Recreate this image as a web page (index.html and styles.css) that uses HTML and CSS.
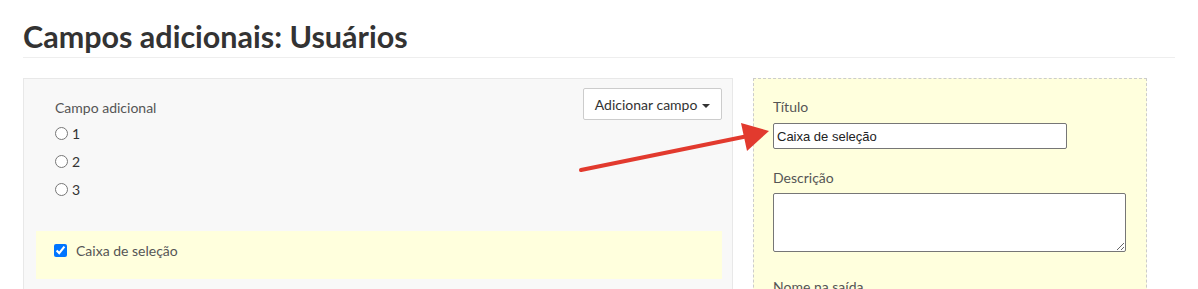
FILE: index.html
```html
<!DOCTYPE html>
<html lang="pt-BR">
<head>
    <meta charset="UTF-8">
    <meta name="viewport" content="width=device-width, initial-scale=1.0">
    <title>Campos adicionais: Usuários</title>
    <link rel="stylesheet" href="styles.css">
</head>
<body>

<div class="page">
    <h1 class="page-title">Campos adicionais: Usuários</h1>

    <div class="panels">
        <!-- Lista de campos -->
        <div class="fields-panel">
            <div class="fields-top">
                <div class="field-preview">
                    <div class="field-label">Campo adicional</div>
                    <label class="radio-row"><input type="radio" name="campo"> 1</label>
                    <label class="radio-row"><input type="radio" name="campo"> 2</label>
                    <label class="radio-row"><input type="radio" name="campo"> 3</label>
                </div>
                <button class="add-button">Adicionar campo <span class="caret"></span></button>
            </div>

            <div class="field-selected">
                <label class="check-row"><input type="checkbox" checked> Caixa de seleção</label>
            </div>
        </div>

        <!-- Propriedades do campo -->
        <div class="props-panel">
            <div class="prop-label">Título</div>
            <input type="text" class="prop-input" value="Caixa de seleção">

            <div class="prop-label prop-label-next">Descrição</div>
            <textarea class="prop-textarea"></textarea>

            <div class="prop-label prop-label-last">Nome na saída</div>
        </div>
    </div>

    <svg class="arrow" width="1198" height="289" viewBox="0 0 1198 289">
        <line x1="581" y1="170" x2="748" y2="136" stroke="#e23a2e" stroke-width="4" stroke-linecap="round"/>
        <polygon points="769,131 741,123 747,151" fill="#e23a2e"/>
    </svg>
</div>

</body>
</html>
```

FILE: styles.css
```css
/* Общие стили */
body {
    font-family: Lato, "Open Sans", sans-serif;
    background-color: #fff;
    color: #333;
    margin: 0;
    padding: 0;
}

.page {
    position: relative;
    padding: 0 23px;
    height: 289px;
    overflow: hidden;
}

.page-title {
    margin: 0;
    padding-top: 17px;
    font-size: 30.5px;
    line-height: 38px;
    font-weight: 700;
    color: #333;
    border-bottom: 1px solid #eee;
    padding-bottom: 2px;
}

.panels {
    display: flex;
    gap: 20px;
    margin-top: 20px;
}

/* Левая панель */
.fields-panel {
    width: 710px;
    height: 260px;
    background-color: #f8f8f8;
    border: 1px solid #e8e8e8;
    padding: 9px 10px 0 12px;
    box-sizing: border-box;
}

.fields-top {
    display: flex;
    justify-content: space-between;
    align-items: flex-start;
}

.field-preview {
    padding: 10px 0 0 19px;
    font-size: 14px;
    color: #555;
}

.field-label {
    line-height: 20px;
    margin-bottom: 1px;
}

.radio-row {
    display: flex;
    align-items: center;
    height: 28px;
    color: #333;
}

.radio-row input {
    width: 13px;
    height: 13px;
    margin: 0 4px 0 0;
}

.add-button {
    height: 32px;
    padding: 0 11px;
    background-color: #fff;
    border: 1px solid #ccc;
    border-radius: 2px;
    font-family: inherit;
    font-size: 14px;
    color: #333;
}

.caret {
    display: inline-block;
    width: 0;
    height: 0;
    margin-left: 1px;
    vertical-align: middle;
    border-top: 4px solid #333;
    border-left: 4px solid transparent;
    border-right: 4px solid transparent;
}

.field-selected {
    margin-top: 28px;
    height: 48px;
    background-color: #ffffdd;
    padding: 9px 0 0 18px;
    box-sizing: border-box;
}

.check-row {
    display: flex;
    align-items: center;
    height: 20px;
    font-size: 14px;
    color: #555;
}

.check-row input {
    width: 13px;
    height: 13px;
    margin: 0 9px 0 0;
}

/* Правая панель */
.props-panel {
    width: 394px;
    height: 260px;
    background-color: #ffffdd;
    border: 1px dashed #ccc;
    padding: 18px 20px 0 19px;
    box-sizing: border-box;
    font-size: 14px;
    color: #555;
}

.prop-label {
    line-height: 20px;
    margin-bottom: 6px;
}

.prop-label-next {
    margin-top: 19px;
    margin-bottom: 5px;
}

.prop-label-last {
    margin-top: 25px;
}

.prop-input {
    display: block;
    box-sizing: border-box;
    width: 294px;
    height: 26px;
    margin: 0;
    padding: 0 3px;
    border: 1px solid #767676;
    border-radius: 2px;
    font-family: "Liberation Sans", Arial, sans-serif;
    font-size: 13px;
    color: #222;
}

.prop-textarea {
    display: block;
    box-sizing: border-box;
    width: 353px;
    height: 59px;
    margin: 0;
    border: 1px solid #767676;
    border-radius: 2px;
}

/* Стрелка */
.arrow {
    position: absolute;
    left: 0;
    top: 0;
    pointer-events: none;
}
```
